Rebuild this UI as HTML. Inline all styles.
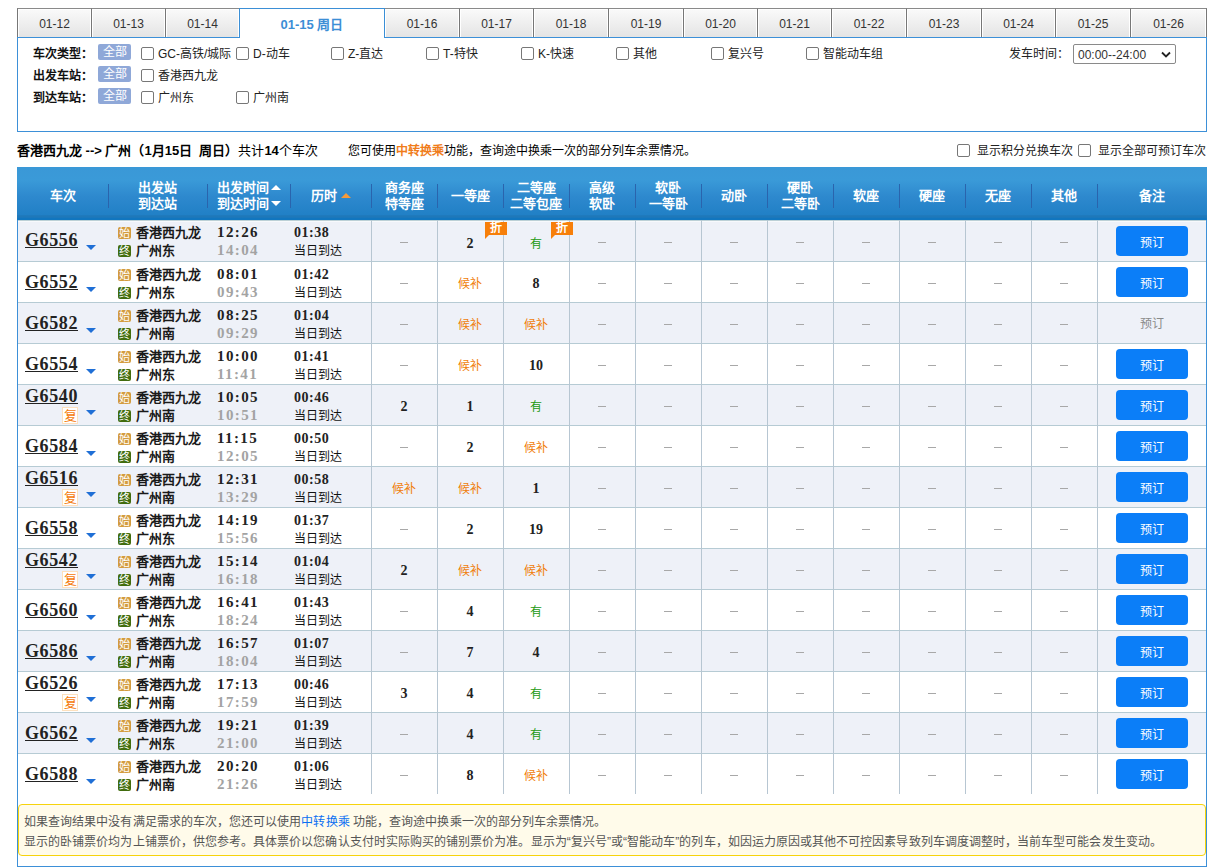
<!DOCTYPE html><html lang="zh-CN"><head><meta charset="utf-8"><style>
*{margin:0;padding:0;box-sizing:border-box}
html,body{width:1215px;height:868px;overflow:hidden;background:#fff}
body{position:relative;font-family:"Liberation Sans",sans-serif;font-size:12px;color:#333}
.a{position:absolute}
.tab{position:absolute;top:8px;height:29px;border-top:1px solid #8a8a8a;border-left:1px solid #777;background:linear-gradient(#fafafa,#e4e4e4);box-shadow:inset 1px 1px 0 #fff,inset -1px 0 0 #fff;text-align:center;line-height:31px;font-size:12px;color:#333}
.tab.last{border-right:1px solid #777}
.tab.act{background:#fff;box-shadow:none;border:1px solid #3b8fd6;border-bottom:none;height:30px;color:#3c8ed6;font-weight:bold;font-size:13px;z-index:2}
.fbox{position:absolute;left:17px;top:37px;width:1190px;height:95px;border:1px solid #3d90d8}
.lbl{position:absolute;left:33px;font-weight:bold;font-size:12px;color:#111;line-height:16px;margin-top:2px}
.all{position:absolute;left:98px;width:33px;height:16px;background:#8fa8d8;border-radius:2px;color:#fff;text-align:center;line-height:16px;font-size:12px}
.cb{position:absolute;width:13px;height:13px;border:1px solid #777;border-radius:2px;background:#fff}
.ct{position:absolute;font-size:12px;line-height:18px;color:#222}
.hdr{position:absolute;left:17px;top:167px;width:1190px;height:53px;background:linear-gradient(#3a98d7 0%,#3a9ad8 25%,#2e89ce 55%,#2180c6 90%,#1f78b9 92%,#1f78b9 95%,#1176bf 96%,#1176bf 100%)}
.hc{position:absolute;top:169px;height:53px;display:flex;align-items:center;justify-content:center;text-align:center;color:#fff;font-weight:bold;font-size:13px;line-height:15.5px}
.up,.dn,.upo{display:inline-block;width:0;height:0;border-left:5px solid transparent;border-right:5px solid transparent;vertical-align:middle;margin-left:2px;position:relative;top:-1px}
.up{border-bottom:5px solid #fff}.dn{border-top:5px solid #fff}.upo{border-bottom:5px solid #f59a3a;margin-left:4px}
.hs{position:absolute;top:17px;width:1px;height:24px;background:#2a64ad}
.row{position:absolute;left:17px;width:1190px}
.vl{position:absolute;width:1px;background:#b7c6d2}
.hl{position:absolute;left:18px;width:1188px;height:1px;background:#b6cbd4}
.tn{position:absolute;left:25px;font-family:"Liberation Serif",serif;font-weight:bold;font-size:18px;letter-spacing:0.6px;color:#222;text-decoration:underline;line-height:20px}
.tri{position:absolute;left:86px;width:0;height:0;border-left:5px solid transparent;border-right:5px solid transparent;border-top:5px solid #1f6fd6}
.fx{position:absolute;left:62px;width:16px;height:17px;background:#fff;border:1px solid #fde0bd;color:#f57a0a;font-size:13px;text-align:center;line-height:15px}
.ic{position:absolute;left:118px;width:13px;height:12px;border-radius:2px;color:#fff;font-size:11px;line-height:12px;text-align:center;overflow:hidden}
.st{position:absolute;left:136px;font-weight:bold;font-size:13px;color:#1a1a1a;line-height:16px}
.tm{position:absolute;left:217px;font-family:"Liberation Serif",serif;font-weight:bold;font-size:15px;letter-spacing:1.4px;line-height:16px;color:#222}
.du{position:absolute;left:294px;font-family:"Liberation Serif",serif;font-weight:bold;font-size:14px;letter-spacing:0.5px;line-height:16px;color:#222}
.dd{position:absolute;left:294px;font-size:12px;line-height:16px;color:#111}
.sc{position:absolute;text-align:center;width:66px;line-height:16px}
.num{font-family:"Liberation Serif",serif;font-weight:bold;font-size:14px;color:#222}
.dash{color:#999;font-size:12px}
.org{color:#f07d0a;font-size:12px}
.grn{color:#22990f;font-size:12px}
.zhe{position:absolute;width:22px;height:13px;background:#f77f0a;color:#fff;font-size:12px;font-weight:bold;line-height:13px;text-align:center}
.zhe:after{content:"";position:absolute;left:0;top:13px;border-top:4px solid #f77f0a;border-right:4px solid transparent}
.btn{position:absolute;left:1116px;width:72px;height:30px;background:#0b7ef8;border-radius:4px;color:#fff;text-align:center;line-height:35px;font-size:12px}
.btnd{position:absolute;left:1116px;width:72px;height:30px;color:#8a8a8a;text-align:center;line-height:33px;font-size:12px}
.notice{position:absolute;left:18px;top:804px;width:1188px;height:52px;border:1px solid #f6d30c;border-radius:4px;background:#fffbea;color:#555;font-size:12px;line-height:20px;letter-spacing:0.06px;padding:7px 0 0 5px}
</style></head><body>
<div class="tab" style="left:17px;width:74px">01-12</div>
<div class="tab" style="left:91px;width:74px">01-13</div>
<div class="tab" style="left:165px;width:74px">01-14</div>
<div class="tab act" style="left:239px;width:146px">01-15 周日</div>
<div class="tab" style="left:384px;width:75px">01-16</div>
<div class="tab" style="left:459px;width:74px">01-17</div>
<div class="tab" style="left:533px;width:75px">01-18</div>
<div class="tab" style="left:608px;width:75px">01-19</div>
<div class="tab" style="left:683px;width:74px">01-20</div>
<div class="tab" style="left:757px;width:74px">01-21</div>
<div class="tab" style="left:831px;width:75px">01-22</div>
<div class="tab" style="left:906px;width:75px">01-23</div>
<div class="tab" style="left:981px;width:74px">01-24</div>
<div class="tab" style="left:1055px;width:75px">01-25</div>
<div class="tab last" style="left:1130px;width:77px">01-26</div>
<div class="fbox"></div>
<div class="lbl" style="top:44px">车次类型：</div><div class="all" style="top:44px">全部</div>
<div class="lbl" style="top:66px">出发车站：</div><div class="all" style="top:66px">全部</div>
<div class="lbl" style="top:88px">到达车站：</div><div class="all" style="top:88px">全部</div>
<div class="cb" style="left:141px;top:47px"></div><div class="ct" style="left:158px;top:45px">GC-高铁/城际</div>
<div class="cb" style="left:236px;top:47px"></div><div class="ct" style="left:253px;top:45px">D-动车</div>
<div class="cb" style="left:331px;top:47px"></div><div class="ct" style="left:348px;top:45px">Z-直达</div>
<div class="cb" style="left:426px;top:47px"></div><div class="ct" style="left:443px;top:45px">T-特快</div>
<div class="cb" style="left:521px;top:47px"></div><div class="ct" style="left:538px;top:45px">K-快速</div>
<div class="cb" style="left:616px;top:47px"></div><div class="ct" style="left:633px;top:45px">其他</div>
<div class="cb" style="left:711px;top:47px"></div><div class="ct" style="left:728px;top:45px">复兴号</div>
<div class="cb" style="left:806px;top:47px"></div><div class="ct" style="left:823px;top:45px">智能动车组</div>
<div class="cb" style="left:141px;top:69px"></div><div class="ct" style="left:158px;top:67px">香港西九龙</div>
<div class="cb" style="left:141px;top:91px"></div><div class="ct" style="left:158px;top:89px">广州东</div>
<div class="cb" style="left:236px;top:91px"></div><div class="ct" style="left:253px;top:89px">广州南</div>
<div class="ct" style="left:1009px;top:45px">发车时间：</div>
<div class="a" style="left:1073px;top:44px;width:103px;height:20px;border:1px solid #8a8a8a;border-radius:2px;font-size:12px;line-height:20px;padding-left:4px;color:#333">00:00--24:00<svg style="position:absolute;left:87px;top:6px" width="10" height="7" viewBox="0 0 10 7"><path d="M1 1.5 L5 5.5 L9 1.5" stroke="#222" stroke-width="1.8" fill="none"/></svg></div>
<div class="a" style="left:17px;top:143px;font-size:13px;line-height:16px;color:#000"><b>香港西九龙 --&gt; 广州（1月15日&nbsp; 周日）</b>共计<b>14</b>个车次</div>
<div class="a" style="left:348px;top:143px;font-size:12px;line-height:16px;color:#000">您可使用<b style="color:#f07c1a">中转换乘</b>功能，查询途中换乘一次的部分列车余票情况。</div>
<div class="cb" style="left:957px;top:144px"></div><div class="ct" style="left:977px;top:142px">显示积分兑换车次</div>
<div class="cb" style="left:1078px;top:144px"></div><div class="ct" style="left:1098px;top:142px">显示全部可预订车次</div>
<div class="hdr"></div>
<div class="hc" style="left:17px;width:91px"><div>车次</div></div>
<div class="hc" style="left:108px;width:99px"><div>出发站<br>到达站</div></div>
<div class="hs" style="left:108px;top:184px"></div>
<div class="hc" style="left:207px;width:83px"><div>出发时间<span class="up"></span><br>到达时间<span class="dn"></span></div></div>
<div class="hs" style="left:207px;top:184px"></div>
<div class="hc" style="left:290px;width:81px"><div>历时<span class="upo"></span></div></div>
<div class="hs" style="left:290px;top:184px"></div>
<div class="hc" style="left:371px;width:66px"><div>商务座<br>特等座</div></div>
<div class="hs" style="left:371px;top:184px"></div>
<div class="hc" style="left:437px;width:66px"><div>一等座</div></div>
<div class="hs" style="left:437px;top:184px"></div>
<div class="hc" style="left:503px;width:66px"><div>二等座<br>二等包座</div></div>
<div class="hs" style="left:503px;top:184px"></div>
<div class="hc" style="left:569px;width:66px"><div>高级<br>软卧</div></div>
<div class="hs" style="left:569px;top:184px"></div>
<div class="hc" style="left:635px;width:66px"><div>软卧<br>一等卧</div></div>
<div class="hs" style="left:635px;top:184px"></div>
<div class="hc" style="left:701px;width:66px"><div>动卧</div></div>
<div class="hs" style="left:701px;top:184px"></div>
<div class="hc" style="left:767px;width:66px"><div>硬卧<br>二等卧</div></div>
<div class="hs" style="left:767px;top:184px"></div>
<div class="hc" style="left:833px;width:66px"><div>软座</div></div>
<div class="hs" style="left:833px;top:184px"></div>
<div class="hc" style="left:899px;width:66px"><div>硬座</div></div>
<div class="hs" style="left:899px;top:184px"></div>
<div class="hc" style="left:965px;width:66px"><div>无座</div></div>
<div class="hs" style="left:965px;top:184px"></div>
<div class="hc" style="left:1031px;width:66px"><div>其他</div></div>
<div class="hs" style="left:1031px;top:184px"></div>
<div class="hc" style="left:1097px;width:110px"><div>备注</div></div>
<div class="hs" style="left:1097px;top:184px"></div>
<div class="a" style="left:17px;top:220px;width:1px;height:647px;background:#3d90d8"></div>
<div class="a" style="left:1206px;top:220px;width:1px;height:647px;background:#3d90d8"></div>
<div class="a" style="left:17px;top:866px;width:1190px;height:1px;background:#3d90d8"></div>
<div class="a" style="left:18px;top:220px;width:1188px;height:41px;background:#eef1f8"></div>
<div class="a" style="left:18px;top:262px;width:1188px;height:40px;background:#fff"></div>
<div class="a" style="left:18px;top:303px;width:1188px;height:40px;background:#eef1f8"></div>
<div class="a" style="left:18px;top:344px;width:1188px;height:40px;background:#fff"></div>
<div class="a" style="left:18px;top:385px;width:1188px;height:40px;background:#eef1f8"></div>
<div class="a" style="left:18px;top:426px;width:1188px;height:40px;background:#fff"></div>
<div class="a" style="left:18px;top:467px;width:1188px;height:40px;background:#eef1f8"></div>
<div class="a" style="left:18px;top:508px;width:1188px;height:40px;background:#fff"></div>
<div class="a" style="left:18px;top:549px;width:1188px;height:40px;background:#eef1f8"></div>
<div class="a" style="left:18px;top:590px;width:1188px;height:40px;background:#fff"></div>
<div class="a" style="left:18px;top:631px;width:1188px;height:40px;background:#eef1f8"></div>
<div class="a" style="left:18px;top:672px;width:1188px;height:40px;background:#fff"></div>
<div class="a" style="left:18px;top:713px;width:1188px;height:40px;background:#eef1f8"></div>
<div class="a" style="left:18px;top:754px;width:1188px;height:40px;background:#fff"></div>
<div class="hl" style="top:261px"></div>
<div class="hl" style="top:302px"></div>
<div class="hl" style="top:343px"></div>
<div class="hl" style="top:384px"></div>
<div class="hl" style="top:425px"></div>
<div class="hl" style="top:466px"></div>
<div class="hl" style="top:507px"></div>
<div class="hl" style="top:548px"></div>
<div class="hl" style="top:589px"></div>
<div class="hl" style="top:630px"></div>
<div class="hl" style="top:671px"></div>
<div class="hl" style="top:712px"></div>
<div class="hl" style="top:753px"></div>
<div class="hl" style="top:220px;background:#bcd0d6"></div><div class="hl" style="top:221px;background:#f7f9fc"></div>
<div class="vl" style="left:371px;top:220px;height:574px"></div>
<div class="vl" style="left:437px;top:220px;height:574px"></div>
<div class="vl" style="left:503px;top:220px;height:574px"></div>
<div class="vl" style="left:569px;top:220px;height:574px"></div>
<div class="vl" style="left:635px;top:220px;height:574px"></div>
<div class="vl" style="left:701px;top:220px;height:574px"></div>
<div class="vl" style="left:767px;top:220px;height:574px"></div>
<div class="vl" style="left:833px;top:220px;height:574px"></div>
<div class="vl" style="left:899px;top:220px;height:574px"></div>
<div class="vl" style="left:965px;top:220px;height:574px"></div>
<div class="vl" style="left:1031px;top:220px;height:574px"></div>
<div class="vl" style="left:1097px;top:220px;height:574px"></div>
<div class="tn" style="top:230px">G6556</div>
<div class="tri" style="top:245px"></div>
<div class="ic" style="top:227px;background:#d39b3e">始</div>
<div class="ic" style="top:245px;background:#416c0e">终</div>
<div class="st" style="top:225px">香港西九龙</div>
<div class="st" style="top:243px">广州东</div>
<div class="tm" style="top:224px">12:26</div>
<div class="tm" style="top:242px;color:#a3a3a3">14:04</div>
<div class="du" style="top:225px">01:38</div>
<div class="dd" style="top:243px">当日到达</div>
<div class="a" style="left:400px;top:242px;width:8px;height:1px;background:#a8a8a8"></div>
<div class="sc num" style="left:437px;top:236px">2</div>
<div class="zhe" style="left:485px;top:222px">折</div>
<div class="sc grn" style="left:503px;top:236px">有</div>
<div class="zhe" style="left:551px;top:222px">折</div>
<div class="a" style="left:598px;top:242px;width:8px;height:1px;background:#a8a8a8"></div>
<div class="a" style="left:664px;top:242px;width:8px;height:1px;background:#a8a8a8"></div>
<div class="a" style="left:730px;top:242px;width:8px;height:1px;background:#a8a8a8"></div>
<div class="a" style="left:796px;top:242px;width:8px;height:1px;background:#a8a8a8"></div>
<div class="a" style="left:862px;top:242px;width:8px;height:1px;background:#a8a8a8"></div>
<div class="a" style="left:928px;top:242px;width:8px;height:1px;background:#a8a8a8"></div>
<div class="a" style="left:994px;top:242px;width:8px;height:1px;background:#a8a8a8"></div>
<div class="a" style="left:1060px;top:242px;width:8px;height:1px;background:#a8a8a8"></div>
<div class="btn" style="top:226px">预订</div>
<div class="tn" style="top:272px">G6552</div>
<div class="tri" style="top:287px"></div>
<div class="ic" style="top:269px;background:#d39b3e">始</div>
<div class="ic" style="top:287px;background:#416c0e">终</div>
<div class="st" style="top:267px">香港西九龙</div>
<div class="st" style="top:285px">广州东</div>
<div class="tm" style="top:266px">08:01</div>
<div class="tm" style="top:284px;color:#a3a3a3">09:43</div>
<div class="du" style="top:267px">01:42</div>
<div class="dd" style="top:285px">当日到达</div>
<div class="a" style="left:400px;top:283px;width:8px;height:1px;background:#a8a8a8"></div>
<div class="sc org" style="left:437px;top:276px">候补</div>
<div class="sc num" style="left:503px;top:276px">8</div>
<div class="a" style="left:598px;top:283px;width:8px;height:1px;background:#a8a8a8"></div>
<div class="a" style="left:664px;top:283px;width:8px;height:1px;background:#a8a8a8"></div>
<div class="a" style="left:730px;top:283px;width:8px;height:1px;background:#a8a8a8"></div>
<div class="a" style="left:796px;top:283px;width:8px;height:1px;background:#a8a8a8"></div>
<div class="a" style="left:862px;top:283px;width:8px;height:1px;background:#a8a8a8"></div>
<div class="a" style="left:928px;top:283px;width:8px;height:1px;background:#a8a8a8"></div>
<div class="a" style="left:994px;top:283px;width:8px;height:1px;background:#a8a8a8"></div>
<div class="a" style="left:1060px;top:283px;width:8px;height:1px;background:#a8a8a8"></div>
<div class="btn" style="top:267px">预订</div>
<div class="tn" style="top:313px">G6582</div>
<div class="tri" style="top:328px"></div>
<div class="ic" style="top:310px;background:#d39b3e">始</div>
<div class="ic" style="top:328px;background:#416c0e">终</div>
<div class="st" style="top:308px">香港西九龙</div>
<div class="st" style="top:326px">广州南</div>
<div class="tm" style="top:307px">08:25</div>
<div class="tm" style="top:325px;color:#a3a3a3">09:29</div>
<div class="du" style="top:308px">01:04</div>
<div class="dd" style="top:326px">当日到达</div>
<div class="a" style="left:400px;top:324px;width:8px;height:1px;background:#a8a8a8"></div>
<div class="sc org" style="left:437px;top:317px">候补</div>
<div class="sc org" style="left:503px;top:317px">候补</div>
<div class="a" style="left:598px;top:324px;width:8px;height:1px;background:#a8a8a8"></div>
<div class="a" style="left:664px;top:324px;width:8px;height:1px;background:#a8a8a8"></div>
<div class="a" style="left:730px;top:324px;width:8px;height:1px;background:#a8a8a8"></div>
<div class="a" style="left:796px;top:324px;width:8px;height:1px;background:#a8a8a8"></div>
<div class="a" style="left:862px;top:324px;width:8px;height:1px;background:#a8a8a8"></div>
<div class="a" style="left:928px;top:324px;width:8px;height:1px;background:#a8a8a8"></div>
<div class="a" style="left:994px;top:324px;width:8px;height:1px;background:#a8a8a8"></div>
<div class="a" style="left:1060px;top:324px;width:8px;height:1px;background:#a8a8a8"></div>
<div class="btnd" style="top:308px">预订</div>
<div class="tn" style="top:354px">G6554</div>
<div class="tri" style="top:369px"></div>
<div class="ic" style="top:351px;background:#d39b3e">始</div>
<div class="ic" style="top:369px;background:#416c0e">终</div>
<div class="st" style="top:349px">香港西九龙</div>
<div class="st" style="top:367px">广州东</div>
<div class="tm" style="top:348px">10:00</div>
<div class="tm" style="top:366px;color:#a3a3a3">11:41</div>
<div class="du" style="top:349px">01:41</div>
<div class="dd" style="top:367px">当日到达</div>
<div class="a" style="left:400px;top:365px;width:8px;height:1px;background:#a8a8a8"></div>
<div class="sc org" style="left:437px;top:358px">候补</div>
<div class="sc num" style="left:503px;top:358px">10</div>
<div class="a" style="left:598px;top:365px;width:8px;height:1px;background:#a8a8a8"></div>
<div class="a" style="left:664px;top:365px;width:8px;height:1px;background:#a8a8a8"></div>
<div class="a" style="left:730px;top:365px;width:8px;height:1px;background:#a8a8a8"></div>
<div class="a" style="left:796px;top:365px;width:8px;height:1px;background:#a8a8a8"></div>
<div class="a" style="left:862px;top:365px;width:8px;height:1px;background:#a8a8a8"></div>
<div class="a" style="left:928px;top:365px;width:8px;height:1px;background:#a8a8a8"></div>
<div class="a" style="left:994px;top:365px;width:8px;height:1px;background:#a8a8a8"></div>
<div class="a" style="left:1060px;top:365px;width:8px;height:1px;background:#a8a8a8"></div>
<div class="btn" style="top:349px">预订</div>
<div class="tn" style="top:386px">G6540</div>
<div class="fx" style="top:407px">复</div>
<div class="tri" style="top:410px"></div>
<div class="ic" style="top:392px;background:#d39b3e">始</div>
<div class="ic" style="top:410px;background:#416c0e">终</div>
<div class="st" style="top:390px">香港西九龙</div>
<div class="st" style="top:408px">广州南</div>
<div class="tm" style="top:389px">10:05</div>
<div class="tm" style="top:407px;color:#a3a3a3">10:51</div>
<div class="du" style="top:390px">00:46</div>
<div class="dd" style="top:408px">当日到达</div>
<div class="sc num" style="left:371px;top:399px">2</div>
<div class="sc num" style="left:437px;top:399px">1</div>
<div class="sc grn" style="left:503px;top:399px">有</div>
<div class="a" style="left:598px;top:406px;width:8px;height:1px;background:#a8a8a8"></div>
<div class="a" style="left:664px;top:406px;width:8px;height:1px;background:#a8a8a8"></div>
<div class="a" style="left:730px;top:406px;width:8px;height:1px;background:#a8a8a8"></div>
<div class="a" style="left:796px;top:406px;width:8px;height:1px;background:#a8a8a8"></div>
<div class="a" style="left:862px;top:406px;width:8px;height:1px;background:#a8a8a8"></div>
<div class="a" style="left:928px;top:406px;width:8px;height:1px;background:#a8a8a8"></div>
<div class="a" style="left:994px;top:406px;width:8px;height:1px;background:#a8a8a8"></div>
<div class="a" style="left:1060px;top:406px;width:8px;height:1px;background:#a8a8a8"></div>
<div class="btn" style="top:390px">预订</div>
<div class="tn" style="top:436px">G6584</div>
<div class="tri" style="top:451px"></div>
<div class="ic" style="top:433px;background:#d39b3e">始</div>
<div class="ic" style="top:451px;background:#416c0e">终</div>
<div class="st" style="top:431px">香港西九龙</div>
<div class="st" style="top:449px">广州南</div>
<div class="tm" style="top:430px">11:15</div>
<div class="tm" style="top:448px;color:#a3a3a3">12:05</div>
<div class="du" style="top:431px">00:50</div>
<div class="dd" style="top:449px">当日到达</div>
<div class="a" style="left:400px;top:447px;width:8px;height:1px;background:#a8a8a8"></div>
<div class="sc num" style="left:437px;top:440px">2</div>
<div class="sc org" style="left:503px;top:440px">候补</div>
<div class="a" style="left:598px;top:447px;width:8px;height:1px;background:#a8a8a8"></div>
<div class="a" style="left:664px;top:447px;width:8px;height:1px;background:#a8a8a8"></div>
<div class="a" style="left:730px;top:447px;width:8px;height:1px;background:#a8a8a8"></div>
<div class="a" style="left:796px;top:447px;width:8px;height:1px;background:#a8a8a8"></div>
<div class="a" style="left:862px;top:447px;width:8px;height:1px;background:#a8a8a8"></div>
<div class="a" style="left:928px;top:447px;width:8px;height:1px;background:#a8a8a8"></div>
<div class="a" style="left:994px;top:447px;width:8px;height:1px;background:#a8a8a8"></div>
<div class="a" style="left:1060px;top:447px;width:8px;height:1px;background:#a8a8a8"></div>
<div class="btn" style="top:431px">预订</div>
<div class="tn" style="top:468px">G6516</div>
<div class="fx" style="top:489px">复</div>
<div class="tri" style="top:492px"></div>
<div class="ic" style="top:474px;background:#d39b3e">始</div>
<div class="ic" style="top:492px;background:#416c0e">终</div>
<div class="st" style="top:472px">香港西九龙</div>
<div class="st" style="top:490px">广州南</div>
<div class="tm" style="top:471px">12:31</div>
<div class="tm" style="top:489px;color:#a3a3a3">13:29</div>
<div class="du" style="top:472px">00:58</div>
<div class="dd" style="top:490px">当日到达</div>
<div class="sc org" style="left:371px;top:481px">候补</div>
<div class="sc org" style="left:437px;top:481px">候补</div>
<div class="sc num" style="left:503px;top:481px">1</div>
<div class="a" style="left:598px;top:488px;width:8px;height:1px;background:#a8a8a8"></div>
<div class="a" style="left:664px;top:488px;width:8px;height:1px;background:#a8a8a8"></div>
<div class="a" style="left:730px;top:488px;width:8px;height:1px;background:#a8a8a8"></div>
<div class="a" style="left:796px;top:488px;width:8px;height:1px;background:#a8a8a8"></div>
<div class="a" style="left:862px;top:488px;width:8px;height:1px;background:#a8a8a8"></div>
<div class="a" style="left:928px;top:488px;width:8px;height:1px;background:#a8a8a8"></div>
<div class="a" style="left:994px;top:488px;width:8px;height:1px;background:#a8a8a8"></div>
<div class="a" style="left:1060px;top:488px;width:8px;height:1px;background:#a8a8a8"></div>
<div class="btn" style="top:472px">预订</div>
<div class="tn" style="top:518px">G6558</div>
<div class="tri" style="top:533px"></div>
<div class="ic" style="top:515px;background:#d39b3e">始</div>
<div class="ic" style="top:533px;background:#416c0e">终</div>
<div class="st" style="top:513px">香港西九龙</div>
<div class="st" style="top:531px">广州东</div>
<div class="tm" style="top:512px">14:19</div>
<div class="tm" style="top:530px;color:#a3a3a3">15:56</div>
<div class="du" style="top:513px">01:37</div>
<div class="dd" style="top:531px">当日到达</div>
<div class="a" style="left:400px;top:529px;width:8px;height:1px;background:#a8a8a8"></div>
<div class="sc num" style="left:437px;top:522px">2</div>
<div class="sc num" style="left:503px;top:522px">19</div>
<div class="a" style="left:598px;top:529px;width:8px;height:1px;background:#a8a8a8"></div>
<div class="a" style="left:664px;top:529px;width:8px;height:1px;background:#a8a8a8"></div>
<div class="a" style="left:730px;top:529px;width:8px;height:1px;background:#a8a8a8"></div>
<div class="a" style="left:796px;top:529px;width:8px;height:1px;background:#a8a8a8"></div>
<div class="a" style="left:862px;top:529px;width:8px;height:1px;background:#a8a8a8"></div>
<div class="a" style="left:928px;top:529px;width:8px;height:1px;background:#a8a8a8"></div>
<div class="a" style="left:994px;top:529px;width:8px;height:1px;background:#a8a8a8"></div>
<div class="a" style="left:1060px;top:529px;width:8px;height:1px;background:#a8a8a8"></div>
<div class="btn" style="top:513px">预订</div>
<div class="tn" style="top:550px">G6542</div>
<div class="fx" style="top:571px">复</div>
<div class="tri" style="top:574px"></div>
<div class="ic" style="top:556px;background:#d39b3e">始</div>
<div class="ic" style="top:574px;background:#416c0e">终</div>
<div class="st" style="top:554px">香港西九龙</div>
<div class="st" style="top:572px">广州南</div>
<div class="tm" style="top:553px">15:14</div>
<div class="tm" style="top:571px;color:#a3a3a3">16:18</div>
<div class="du" style="top:554px">01:04</div>
<div class="dd" style="top:572px">当日到达</div>
<div class="sc num" style="left:371px;top:563px">2</div>
<div class="sc org" style="left:437px;top:563px">候补</div>
<div class="sc org" style="left:503px;top:563px">候补</div>
<div class="a" style="left:598px;top:570px;width:8px;height:1px;background:#a8a8a8"></div>
<div class="a" style="left:664px;top:570px;width:8px;height:1px;background:#a8a8a8"></div>
<div class="a" style="left:730px;top:570px;width:8px;height:1px;background:#a8a8a8"></div>
<div class="a" style="left:796px;top:570px;width:8px;height:1px;background:#a8a8a8"></div>
<div class="a" style="left:862px;top:570px;width:8px;height:1px;background:#a8a8a8"></div>
<div class="a" style="left:928px;top:570px;width:8px;height:1px;background:#a8a8a8"></div>
<div class="a" style="left:994px;top:570px;width:8px;height:1px;background:#a8a8a8"></div>
<div class="a" style="left:1060px;top:570px;width:8px;height:1px;background:#a8a8a8"></div>
<div class="btn" style="top:554px">预订</div>
<div class="tn" style="top:600px">G6560</div>
<div class="tri" style="top:615px"></div>
<div class="ic" style="top:597px;background:#d39b3e">始</div>
<div class="ic" style="top:615px;background:#416c0e">终</div>
<div class="st" style="top:595px">香港西九龙</div>
<div class="st" style="top:613px">广州东</div>
<div class="tm" style="top:594px">16:41</div>
<div class="tm" style="top:612px;color:#a3a3a3">18:24</div>
<div class="du" style="top:595px">01:43</div>
<div class="dd" style="top:613px">当日到达</div>
<div class="a" style="left:400px;top:611px;width:8px;height:1px;background:#a8a8a8"></div>
<div class="sc num" style="left:437px;top:604px">4</div>
<div class="sc grn" style="left:503px;top:604px">有</div>
<div class="a" style="left:598px;top:611px;width:8px;height:1px;background:#a8a8a8"></div>
<div class="a" style="left:664px;top:611px;width:8px;height:1px;background:#a8a8a8"></div>
<div class="a" style="left:730px;top:611px;width:8px;height:1px;background:#a8a8a8"></div>
<div class="a" style="left:796px;top:611px;width:8px;height:1px;background:#a8a8a8"></div>
<div class="a" style="left:862px;top:611px;width:8px;height:1px;background:#a8a8a8"></div>
<div class="a" style="left:928px;top:611px;width:8px;height:1px;background:#a8a8a8"></div>
<div class="a" style="left:994px;top:611px;width:8px;height:1px;background:#a8a8a8"></div>
<div class="a" style="left:1060px;top:611px;width:8px;height:1px;background:#a8a8a8"></div>
<div class="btn" style="top:595px">预订</div>
<div class="tn" style="top:641px">G6586</div>
<div class="tri" style="top:656px"></div>
<div class="ic" style="top:638px;background:#d39b3e">始</div>
<div class="ic" style="top:656px;background:#416c0e">终</div>
<div class="st" style="top:636px">香港西九龙</div>
<div class="st" style="top:654px">广州南</div>
<div class="tm" style="top:635px">16:57</div>
<div class="tm" style="top:653px;color:#a3a3a3">18:04</div>
<div class="du" style="top:636px">01:07</div>
<div class="dd" style="top:654px">当日到达</div>
<div class="a" style="left:400px;top:652px;width:8px;height:1px;background:#a8a8a8"></div>
<div class="sc num" style="left:437px;top:645px">7</div>
<div class="sc num" style="left:503px;top:645px">4</div>
<div class="a" style="left:598px;top:652px;width:8px;height:1px;background:#a8a8a8"></div>
<div class="a" style="left:664px;top:652px;width:8px;height:1px;background:#a8a8a8"></div>
<div class="a" style="left:730px;top:652px;width:8px;height:1px;background:#a8a8a8"></div>
<div class="a" style="left:796px;top:652px;width:8px;height:1px;background:#a8a8a8"></div>
<div class="a" style="left:862px;top:652px;width:8px;height:1px;background:#a8a8a8"></div>
<div class="a" style="left:928px;top:652px;width:8px;height:1px;background:#a8a8a8"></div>
<div class="a" style="left:994px;top:652px;width:8px;height:1px;background:#a8a8a8"></div>
<div class="a" style="left:1060px;top:652px;width:8px;height:1px;background:#a8a8a8"></div>
<div class="btn" style="top:636px">预订</div>
<div class="tn" style="top:673px">G6526</div>
<div class="fx" style="top:694px">复</div>
<div class="tri" style="top:697px"></div>
<div class="ic" style="top:679px;background:#d39b3e">始</div>
<div class="ic" style="top:697px;background:#416c0e">终</div>
<div class="st" style="top:677px">香港西九龙</div>
<div class="st" style="top:695px">广州南</div>
<div class="tm" style="top:676px">17:13</div>
<div class="tm" style="top:694px;color:#a3a3a3">17:59</div>
<div class="du" style="top:677px">00:46</div>
<div class="dd" style="top:695px">当日到达</div>
<div class="sc num" style="left:371px;top:686px">3</div>
<div class="sc num" style="left:437px;top:686px">4</div>
<div class="sc grn" style="left:503px;top:686px">有</div>
<div class="a" style="left:598px;top:693px;width:8px;height:1px;background:#a8a8a8"></div>
<div class="a" style="left:664px;top:693px;width:8px;height:1px;background:#a8a8a8"></div>
<div class="a" style="left:730px;top:693px;width:8px;height:1px;background:#a8a8a8"></div>
<div class="a" style="left:796px;top:693px;width:8px;height:1px;background:#a8a8a8"></div>
<div class="a" style="left:862px;top:693px;width:8px;height:1px;background:#a8a8a8"></div>
<div class="a" style="left:928px;top:693px;width:8px;height:1px;background:#a8a8a8"></div>
<div class="a" style="left:994px;top:693px;width:8px;height:1px;background:#a8a8a8"></div>
<div class="a" style="left:1060px;top:693px;width:8px;height:1px;background:#a8a8a8"></div>
<div class="btn" style="top:677px">预订</div>
<div class="tn" style="top:723px">G6562</div>
<div class="tri" style="top:738px"></div>
<div class="ic" style="top:720px;background:#d39b3e">始</div>
<div class="ic" style="top:738px;background:#416c0e">终</div>
<div class="st" style="top:718px">香港西九龙</div>
<div class="st" style="top:736px">广州东</div>
<div class="tm" style="top:717px">19:21</div>
<div class="tm" style="top:735px;color:#a3a3a3">21:00</div>
<div class="du" style="top:718px">01:39</div>
<div class="dd" style="top:736px">当日到达</div>
<div class="a" style="left:400px;top:734px;width:8px;height:1px;background:#a8a8a8"></div>
<div class="sc num" style="left:437px;top:727px">4</div>
<div class="sc grn" style="left:503px;top:727px">有</div>
<div class="a" style="left:598px;top:734px;width:8px;height:1px;background:#a8a8a8"></div>
<div class="a" style="left:664px;top:734px;width:8px;height:1px;background:#a8a8a8"></div>
<div class="a" style="left:730px;top:734px;width:8px;height:1px;background:#a8a8a8"></div>
<div class="a" style="left:796px;top:734px;width:8px;height:1px;background:#a8a8a8"></div>
<div class="a" style="left:862px;top:734px;width:8px;height:1px;background:#a8a8a8"></div>
<div class="a" style="left:928px;top:734px;width:8px;height:1px;background:#a8a8a8"></div>
<div class="a" style="left:994px;top:734px;width:8px;height:1px;background:#a8a8a8"></div>
<div class="a" style="left:1060px;top:734px;width:8px;height:1px;background:#a8a8a8"></div>
<div class="btn" style="top:718px">预订</div>
<div class="tn" style="top:764px">G6588</div>
<div class="tri" style="top:779px"></div>
<div class="ic" style="top:761px;background:#d39b3e">始</div>
<div class="ic" style="top:779px;background:#416c0e">终</div>
<div class="st" style="top:759px">香港西九龙</div>
<div class="st" style="top:777px">广州南</div>
<div class="tm" style="top:758px">20:20</div>
<div class="tm" style="top:776px;color:#a3a3a3">21:26</div>
<div class="du" style="top:759px">01:06</div>
<div class="dd" style="top:777px">当日到达</div>
<div class="a" style="left:400px;top:775px;width:8px;height:1px;background:#a8a8a8"></div>
<div class="sc num" style="left:437px;top:768px">8</div>
<div class="sc org" style="left:503px;top:768px">候补</div>
<div class="a" style="left:598px;top:775px;width:8px;height:1px;background:#a8a8a8"></div>
<div class="a" style="left:664px;top:775px;width:8px;height:1px;background:#a8a8a8"></div>
<div class="a" style="left:730px;top:775px;width:8px;height:1px;background:#a8a8a8"></div>
<div class="a" style="left:796px;top:775px;width:8px;height:1px;background:#a8a8a8"></div>
<div class="a" style="left:862px;top:775px;width:8px;height:1px;background:#a8a8a8"></div>
<div class="a" style="left:928px;top:775px;width:8px;height:1px;background:#a8a8a8"></div>
<div class="a" style="left:994px;top:775px;width:8px;height:1px;background:#a8a8a8"></div>
<div class="a" style="left:1060px;top:775px;width:8px;height:1px;background:#a8a8a8"></div>
<div class="btn" style="top:759px">预订</div>
<div class="notice">如果查询结果中没有满足需求的车次，您还可以使用<span style="color:#0b6ff2">中转换乘</span> 功能，查询途中换乘一次的部分列车余票情况。<br>显示的卧铺票价均为上铺票价，供您参考。具体票价以您确认支付时实际购买的铺别票价为准。显示为“复兴号”或“智能动车”的列车，如因运力原因或其他不可控因素导致列车调度调整时，当前车型可能会发生变动。</div>
</body></html>
